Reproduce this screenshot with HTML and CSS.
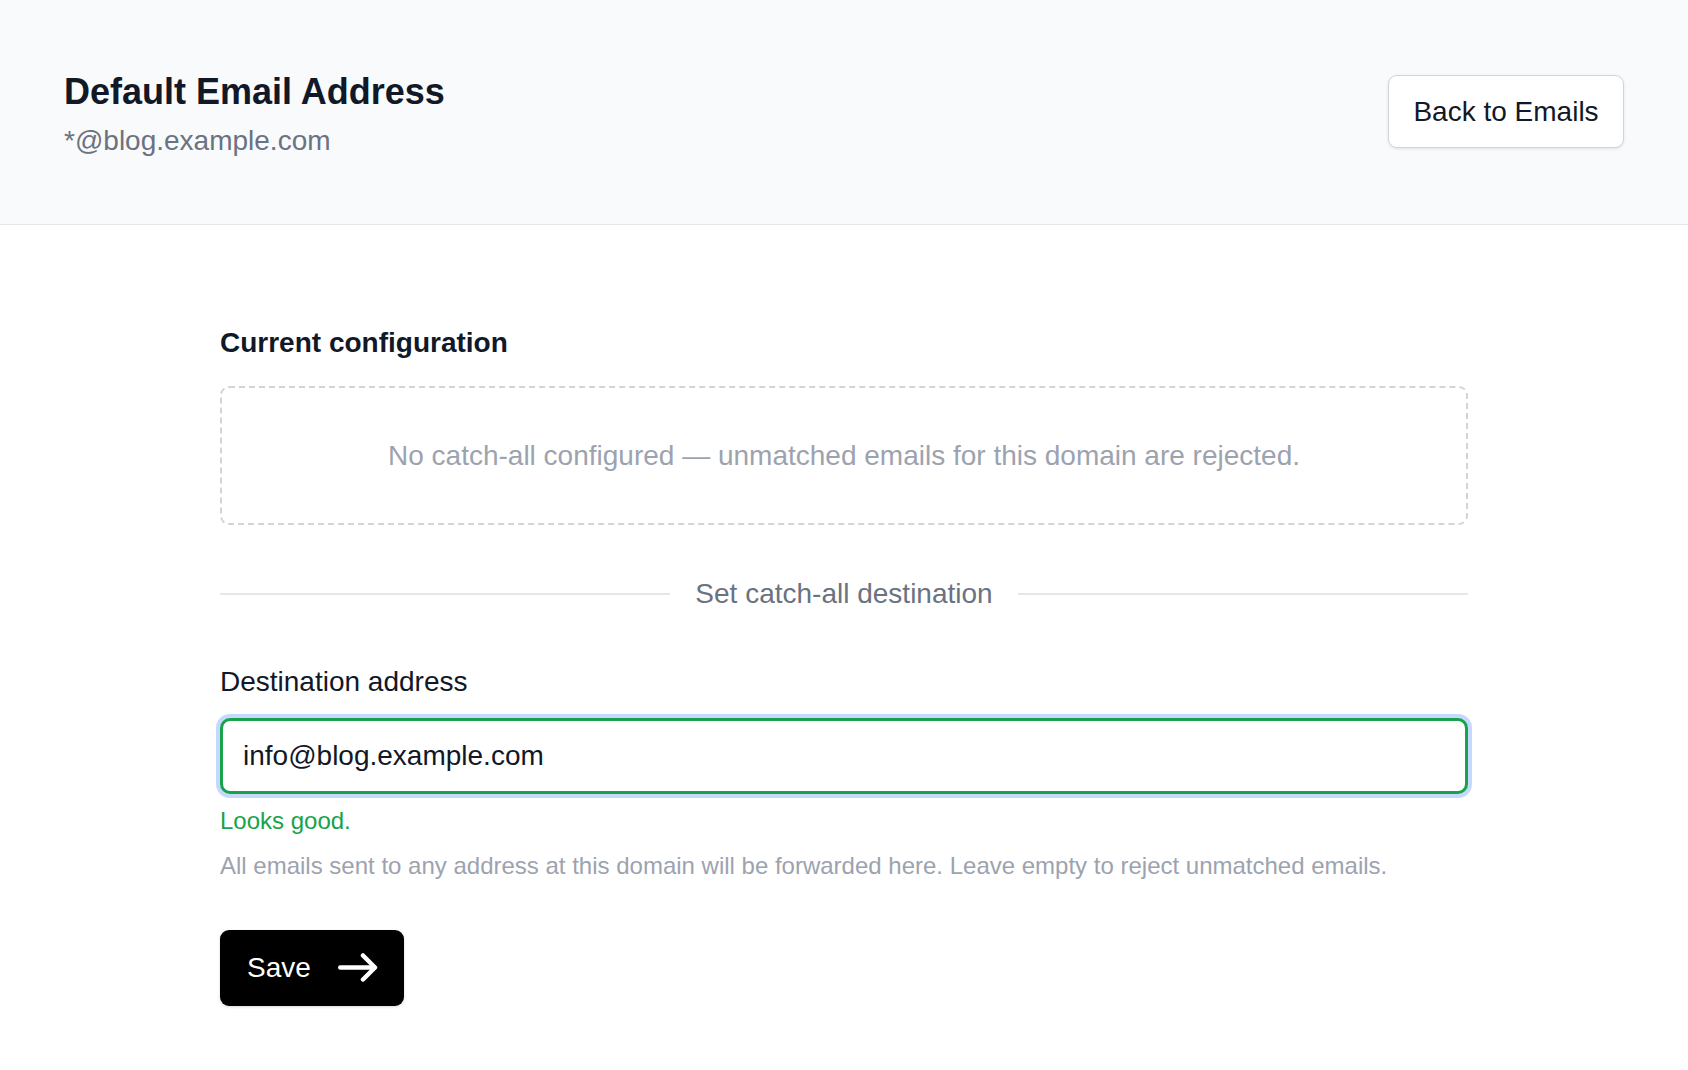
FILE: index.html
```html
<!DOCTYPE html>
<html lang="en">
<head>
    <meta charset="UTF-8">
    <meta name="viewport" content="width=device-width, initial-scale=1.0">
    <title>Default Email Address</title>
    <link rel="stylesheet" href="styles.css">
</head>
<body>
    <div class="page-header">
        <div class="header-text">
            <h1 class="title">Default Email Address</h1>
            <div class="subtitle">*@blog.example.com</div>
        </div>
        <button class="back-button">Back to Emails</button>
    </div>

    <div class="content">
        <h2 class="section-title">Current configuration</h2>
        <div class="empty-box">No catch-all configured — unmatched emails for this domain are rejected.</div>

        <div class="divider">Set catch-all destination</div>

        <!-- Catch-all form -->
        <label class="field-label" for="destination">Destination address</label>
        <input class="field-input" type="email" id="destination" value="info@blog.example.com">
        <p class="valid">Looks good.</p>
        <p class="help">All emails sent to any address at this domain will be forwarded here. Leave empty to reject unmatched emails.</p>

        <button class="save-button">
            <span>Save</span>
            <svg width="40" height="29" viewBox="0 0 40 29" fill="none" stroke="#fff" stroke-width="4.5" stroke-linecap="round" stroke-linejoin="round">
                <path d="M2.25 14.5H36"/>
                <path d="M25 2.5l12 12-12 12"/>
            </svg>
        </button>
    </div>
</body>
</html>
```

FILE: styles.css
```css
body {
    margin: 0;
    font-family: "Liberation Sans", Arial, sans-serif;
    font-size: 28px;
    line-height: 1.5;
    color: #111827;
    background-color: #ffffff;
}
.page-header {
    display: flex;
    justify-content: space-between;
    align-items: flex-start;
    padding: 69px 64px 62px 64px;
    background-color: #f9fafb;
    border-bottom: 1px solid #e5e7eb;
}
.title {
    margin: 0;
    font-size: 36px;
    line-height: 45px;
    font-weight: bold;
    color: #111827;
}
.subtitle {
    margin-top: 6px;
    color: #6b7280;
}
.back-button {
    margin-top: 6px;
    padding: 14.5px 24.4px;
    background: white;
    border: 1px solid #d1d5db;
    border-radius: 9px;
    box-shadow: 0 1px 3px rgba(0, 0, 0, 0.1);
    font-family: inherit;
    font-size: 28px;
    line-height: 1.5;
    color: #111827;
    cursor: pointer;
}
.content {
    max-width: 1248px;
    margin: 0 auto;
    padding: 96.5px 0 48px 0;
}
.section-title {
    margin: 0 0 22.7px 0;
    font-size: 28px;
    line-height: 1.5;
    font-weight: bold;
}
.empty-box {
    padding: 46.5px;
    border: 2px dashed #d1d5db;
    border-radius: 9px;
    text-align: center;
    color: #9ca3af;
}
.divider {
    display: flex;
    align-items: center;
    gap: 25px;
    margin-top: 48px;
    color: #6b7280;
}
.divider::before, .divider::after {
    content: "";
    flex: 1;
    height: 2px;
    background-color: #e5e7eb;
}
.field-label {
    display: block;
    margin-top: 46.3px;
    margin-bottom: 14.4px;
}
.field-input {
    display: block;
    width: 100%;
    height: 76px;
    box-sizing: border-box;
    padding: 0 20px;
    border: 3px solid #16a34a;
    border-radius: 10px;
    box-shadow: 0 0 0 4px rgba(59, 130, 246, 0.3);
    outline: none;
    font-family: inherit;
    font-size: 28px;
    color: #111827;
}
.valid {
    margin: 9px 0 0 0;
    font-size: 24px;
    line-height: 36px;
    color: #16a34a;
}
.help {
    margin: 9px 0 0 0;
    font-size: 24px;
    line-height: 36px;
    color: #9ca3af;
}
.save-button {
    display: inline-flex;
    align-items: center;
    gap: 27px;
    margin-top: 46px;
    padding: 17px 26px 17px 27px;
    background-color: #000000;
    color: white;
    border: none;
    border-radius: 9px;
    box-shadow: 0 1px 3px rgba(0, 0, 0, 0.15);
    font-family: inherit;
    font-size: 28px;
    line-height: 1.5;
    cursor: pointer;
}
```
